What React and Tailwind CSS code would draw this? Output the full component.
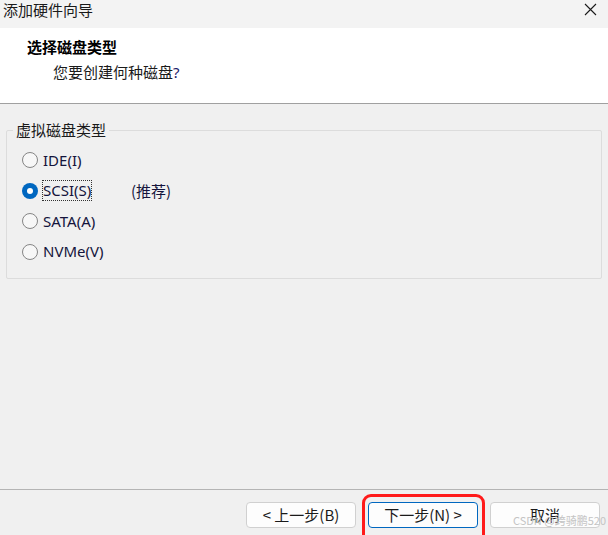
import React from "react";

const cjk = { fontFamily: '"Noto Sans CJK SC", "Noto Sans", sans-serif' };
const ui = { fontFamily: '"Noto Sans", "Noto Sans CJK SC", sans-serif' };

const options = [
  { id: "ide", label: "IDE(I)" },
  { id: "scsi", label: "SCSI(S)", note: "(推荐)" },
  { id: "sata", label: "SATA(A)" },
  { id: "nvme", label: "NVMe(V)" },
];

const Radio = ({ checked }) =>
  checked ? (
    <span className="w-[16px] h-[16px] rounded-full bg-[#0067c0] flex items-center justify-center shrink-0">
      <span className="w-[6px] h-[6px] rounded-full bg-white" />
    </span>
  ) : (
    <span className="w-[16px] h-[16px] rounded-full border border-[#858585] bg-[#f7f7f7] shrink-0" />
  );

const WizardButton = ({ children, primary }) => (
  <button
    className={`w-[110px] h-[26px] rounded-[4px] text-[15px] text-[#1a1a1a] flex items-center justify-center ${
      primary ? "border border-[#0067c0] bg-[#fdfdfd]" : "border border-[#d0d0d0] bg-[#fdfdfd]"
    }`}
    style={cjk}
  >
    {children}
  </button>
);

export default function App() {
  const selected = "scsi";

  return (
    <div className="w-[608px] h-[535px] flex flex-col bg-[#f0f0f0] overflow-hidden relative" style={cjk}>
      {/* title bar */}
      <div className="h-[28px] bg-[#f3f3f3] flex justify-between items-start">
        <span className="text-[15px] leading-[19px] text-[#1a1a1a] pl-[3px]">添加硬件向导</span>
        <svg width="13" height="13" viewBox="0 0 13 13" className="mt-[3px] mr-[11px]">
          <path d="M1 1 L12 12 M12 1 L1 12" stroke="#1a1a1a" strokeWidth="1.1" />
        </svg>
      </div>

      {/* header */}
      <div className="h-[76px] bg-white border-b border-[#a0a0a0] pl-[27px] pt-[9px]">
        <div className="text-[15px] leading-[20px] font-bold text-black">选择磁盘类型</div>
        <div className="text-[15px] leading-[20px] text-[#1a1a1a] pl-[26px] mt-[5px]">
          您要创建何种磁盘<span style={ui} className="text-[#1a1a6a]">?</span>
        </div>
      </div>

      {/* body */}
      <div className="flex-1 px-[6px] pt-[16px]">
        <fieldset className="border border-[#dcdcdc] rounded-[2px] pb-[12px] h-[159px]">
          <legend className="text-[15px] leading-[20px] text-[#1a1a1a] px-[3px] ml-[6px]">虚拟磁盘类型</legend>
          <div className="flex flex-col pt-[5px] pl-[15px]">
            {options.map((o) => (
              <div key={o.id} className="h-[30.5px] flex items-center gap-[5px]">
                <Radio checked={o.id === selected} />
                <span className="w-[83px] flex">
                  <span
                    style={ui}
                    className={`text-[15px] leading-[19px] text-[#14143c] ${
                      o.id === selected ? "outline-1 outline-dotted outline-[#333]" : ""
                    }`}
                  >
                    {o.label}
                  </span>
                </span>
                {o.note && <span className="text-[15px] text-[#14143c]">{o.note}</span>}
              </div>
            ))}
          </div>
        </fieldset>
      </div>

      {/* footer */}
      <div className="h-[46px] border-t border-[#b4b4b4] flex justify-end gap-[12px] pr-[8px] pt-[12px]">
        <WizardButton>&lt; 上一步(B)</WizardButton>
        <div className="relative">
          <WizardButton primary>下一步(N) &gt;</WizardButton>
          <div className="absolute left-[-6px] right-[-7px] top-[-8px] bottom-[-14px] border-[3px] border-[#ff1a1a] rounded-[9px]" />
        </div>
        <WizardButton>取消</WizardButton>
      </div>

      <span className="absolute left-[513px] top-[514px] text-[11px] leading-[13px] text-[#c4c4c4] whitespace-nowrap">
        CSDN @跨骑鹏520
      </span>
    </div>
  );
}
